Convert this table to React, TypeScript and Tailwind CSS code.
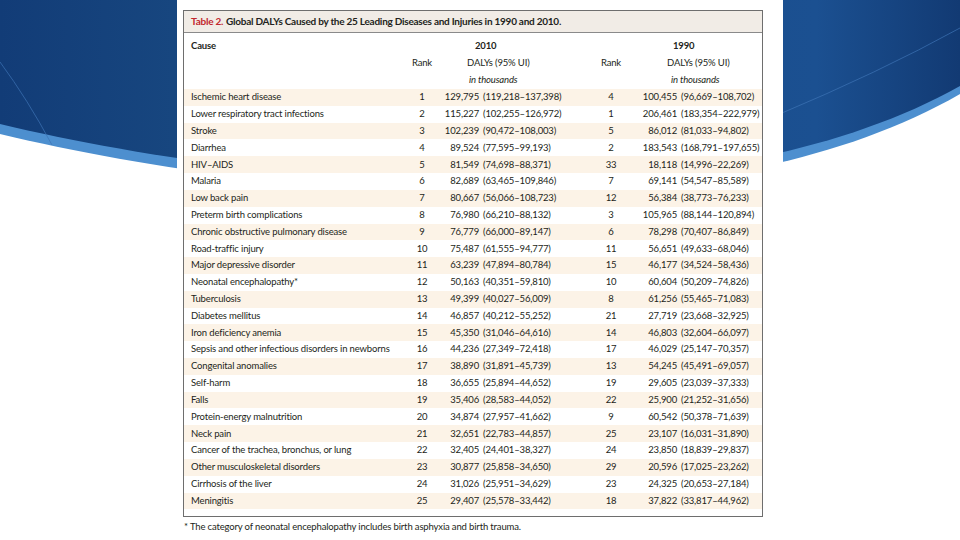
import React from "react";

const rows: string[][] = [
  ["Ischemic heart disease", "1", "129,795", "(119,218–137,398)", "4", "100,455", "(96,669–108,702)"],
  ["Lower respiratory tract infections", "2", "115,227", "(102,255–126,972)", "1", "206,461", "(183,354–222,979)"],
  ["Stroke", "3", "102,239", "(90,472–108,003)", "5", "86,012", "(81,033–94,802)"],
  ["Diarrhea", "4", "89,524", "(77,595–99,193)", "2", "183,543", "(168,791–197,655)"],
  ["HIV–AIDS", "5", "81,549", "(74,698–88,371)", "33", "18,118", "(14,996–22,269)"],
  ["Malaria", "6", "82,689", "(63,465–109,846)", "7", "69,141", "(54,547–85,589)"],
  ["Low back pain", "7", "80,667", "(56,066–108,723)", "12", "56,384", "(38,773–76,233)"],
  ["Preterm birth complications", "8", "76,980", "(66,210–88,132)", "3", "105,965", "(88,144–120,894)"],
  ["Chronic obstructive pulmonary disease", "9", "76,779", "(66,000–89,147)", "6", "78,298", "(70,407–86,849)"],
  ["Road-traffic injury", "10", "75,487", "(61,555–94,777)", "11", "56,651", "(49,633–68,046)"],
  ["Major depressive disorder", "11", "63,239", "(47,894–80,784)", "15", "46,177", "(34,524–58,436)"],
  ["Neonatal encephalopathy*", "12", "50,163", "(40,351–59,810)", "10", "60,604", "(50,209–74,826)"],
  ["Tuberculosis", "13", "49,399", "(40,027–56,009)", "8", "61,256", "(55,465–71,083)"],
  ["Diabetes mellitus", "14", "46,857", "(40,212–55,252)", "21", "27,719", "(23,668–32,925)"],
  ["Iron deficiency anemia", "15", "45,350", "(31,046–64,616)", "14", "46,803", "(32,604–66,097)"],
  ["Sepsis and other infectious disorders in newborns", "16", "44,236", "(27,349–72,418)", "17", "46,029", "(25,147–70,357)"],
  ["Congenital anomalies", "17", "38,890", "(31,891–45,739)", "13", "54,245", "(45,491–69,057)"],
  ["Self-harm", "18", "36,655", "(25,894–44,652)", "19", "29,605", "(23,039–37,333)"],
  ["Falls", "19", "35,406", "(28,583–44,052)", "22", "25,900", "(21,252–31,656)"],
  ["Protein-energy malnutrition", "20", "34,874", "(27,957–41,662)", "9", "60,542", "(50,378–71,639)"],
  ["Neck pain", "21", "32,651", "(22,783–44,857)", "25", "23,107", "(16,031–31,890)"],
  ["Cancer of the trachea, bronchus, or lung", "22", "32,405", "(24,401–38,327)", "24", "23,850", "(18,839–29,837)"],
  ["Other musculoskeletal disorders", "23", "30,877", "(25,858–34,650)", "29", "20,596", "(17,025–23,262)"],
  ["Cirrhosis of the liver", "24", "31,026", "(25,951–34,629)", "23", "24,325", "(20,653–27,184)"],
  ["Meningitis", "25", "29,407", "(25,578–33,442)", "18", "37,822", "(33,817–44,962)"],
];

function Background() {
  return (
    <svg className="absolute inset-0" width="960" height="540" viewBox="0 0 960 540">
      <defs>
        <linearGradient id="bg" x1="0" y1="0" x2="1" y2="0">
          <stop offset="0" stopColor="#123c77" />
          <stop offset="0.18" stopColor="#17467f" />
          <stop offset="0.85" stopColor="#1b5091" />
          <stop offset="1" stopColor="#123a73" />
        </linearGradient>
      </defs>
      <path d="M0,0 H960 V94 C700,244 250,194 0,134 Z" fill="#4d8fcf" />
      <path d="M0,0 H960 V86 C700,232 250,184 0,124 Z" fill="url(#bg)" />
      <path d="M0,62 Q28,100 52,145" stroke="#3d73b5" strokeWidth="1" fill="none" opacity="0.7" />
      <path d="M775,116 Q880,72 960,28" stroke="#3d73b5" strokeWidth="1" fill="none" opacity="0.7" />
    </svg>
  );
}

export default function App() {
  return (
    <div
      className="relative w-[960px] h-[540px] overflow-hidden bg-white text-[#231f20]"
      style={{ fontFamily: "Lato, 'Liberation Sans', sans-serif" }}
    >
      <Background />
      <div className="relative flex justify-center h-full">
        <div className="w-[606px] h-full bg-white px-[6px] pt-[10px]">
          <div className="w-[580px] border border-[#6e6e6e]">
            <div className="h-[22px] bg-[#f1ece6] border-b border-[#8a8a8a] pl-[7px] flex items-center text-[10px] font-bold tracking-[-0.25px] whitespace-nowrap">
              <span className="text-[#c1272d]">Table 2.</span>
              <span className="ml-[3px]">Global DALYs Caused by the 25 Leading Diseases and Injuries in 1990 and 2010.</span>
            </div>
            <div className="pt-[5px] text-[9.5px] tracking-[-0.15px]">
              <div className="grid grid-cols-[220px_36px_153px_36px_1fr] h-[17px] items-center">
                <div className="pl-[7px] font-bold">Cause</div>
                <div className="col-span-2 pl-[71px] font-bold">2010</div>
                <div className="col-span-2 pl-[80px] font-bold">1990</div>
              </div>
              <div className="grid grid-cols-[220px_36px_153px_36px_1fr] h-[17px] items-center">
                <div />
                <div className="text-center">Rank</div>
                <div className="pl-[27px]">DALYs (95% UI)</div>
                <div className="text-center">Rank</div>
                <div className="pl-[38px]">DALYs (95% UI)</div>
              </div>
              <div className="grid grid-cols-[220px_36px_153px_36px_1fr] h-[17px] items-center italic">
                <div />
                <div />
                <div className="pl-[29px]">in thousands</div>
                <div />
                <div className="pl-[42px]">in thousands</div>
              </div>
            </div>
            <div className="pb-[7px] text-[9.5px] tracking-[-0.15px]">
              {rows.map((r, i) => (
                <div
                  key={i}
                  className={`grid grid-cols-[220px_36px_153px_36px_1fr] h-[16.82px] items-center whitespace-nowrap ${
                    i % 2 === 0 ? "bg-[#fcf3e7]" : "bg-white"
                  }`}
                >
                  <div className="pl-[7px]">{r[0]}</div>
                  <div className="text-center">{r[1]}</div>
                  <div className="flex">
                    <span className="w-[39px] text-right">{r[2]}</span>
                    <span className="ml-[4px]">{r[3]}</span>
                  </div>
                  <div className="text-center">{r[4]}</div>
                  <div className="flex">
                    <span className="w-[48px] text-right">{r[5]}</span>
                    <span className="ml-[4px]">{r[6]}</span>
                  </div>
                </div>
              ))}
            </div>
          </div>
          <div className="mt-[4px] pl-[1px] text-[9.5px] leading-[12px] tracking-[-0.15px] whitespace-nowrap">
            * The category of neonatal encephalopathy includes birth asphyxia and birth trauma.
          </div>
        </div>
      </div>
    </div>
  );
}
